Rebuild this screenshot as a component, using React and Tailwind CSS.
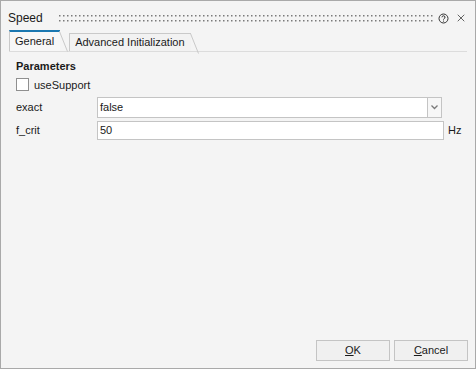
import { X } from "lucide-react";

const font = { fontFamily: '"Liberation Sans", Arial, sans-serif' };

function Grip() {
  return (
    <svg className="h-[9px] flex-1">
      <defs>
        <pattern id="grip" width="4" height="5" patternUnits="userSpaceOnUse">
          <rect x="1" y="1" width="1.5" height="1.5" fill="#7a7a7a" />
        </pattern>
      </defs>
      <rect width="100%" height="9" fill="url(#grip)" />
    </svg>
  );
}

function HelpIcon() {
  return (
    <svg width="11" height="11" viewBox="0 0 11 11" fill="none" stroke="#333" strokeWidth="1">
      <circle cx="5.5" cy="5.5" r="4.5" />
      <path d="M4 4.3a1.5 1.5 0 1 1 2 1.4c-.4.2-.5.5-.5.9" />
      <rect x="5" y="7.6" width="1" height="1" fill="#333" stroke="none" />
    </svg>
  );
}

function Tab({ label, active }) {
  return (
    <div
      className={`relative flex items-center pl-[5px] pr-[6px] text-[11px] text-[#1a1a1a] ${
        active
          ? "h-[21px] border-t-2 border-l border-t-[#1a77b0] border-l-[#c9c9c9] bg-[#f7f7f7]"
          : "h-[18px] mt-[3px] border-t border-l border-[#c9c9c9] bg-[#f2f2f2]"
      }`}
    >
      {label}
      <svg className="absolute right-[-8px] top-[-1px]" width="9" height="22" viewBox="0 0 9 22">
        <path d="M0 0.5h0.5l8 20" fill="none" stroke="#c9c9c9" />
      </svg>
    </div>
  );
}

export default function App() {
  return (
    <div
      className="flex h-[369px] w-[476px] flex-col border border-[#a9a9a9] bg-[#f4f4f4]"
      style={font}
    >
      <div className="flex h-[28px] items-center pl-[7px] pr-[8px] pt-[6px]">
        <span className="w-[50px] text-[12px] text-[#1a1a1a]">Speed</span>
        <Grip />
        <div className="flex items-center gap-[6px] pl-[5px]">
          <HelpIcon />
          <X className="h-[12px] w-[12px] text-[#333]" strokeWidth={1.5} />
        </div>
      </div>

      <div className="mx-[8px] mt-[1px] flex border-b border-[#dcdcdc]">
        <Tab label="General" active />
        <div className="w-[9px]" />
        <Tab label="Advanced Initialization" />
      </div>

      <div className="flex flex-1 flex-col px-[15px] pt-[6px] text-[11px] text-[#1a1a1a]">
        <div className="font-bold">Parameters</div>
        <label className="mt-[2px] flex items-center gap-[5px]">
          <span className="h-[13px] w-[13px] border border-[#8f8f8f] bg-white" />
          useSupport
        </label>

        <div className="mt-[4px] flex items-center">
          <span className="w-[81px]">exact</span>
          <div className="mr-[18px] flex h-[21px] flex-1 items-center border border-[#c4c4c4] bg-white pl-[2px]">
            <span className="flex-1">false</span>
            <div className="flex h-full w-[14px] items-center justify-center border-l border-[#c4c4c4] bg-[#f7f7f7]">
              <svg width="7" height="5" viewBox="0 0 7 5">
                <path d="M0.5 0.5l3 3 3-3" fill="none" stroke="#7a7a7a" strokeWidth="1.3" />
              </svg>
            </div>
          </div>
        </div>

        <div className="mt-[3px] flex items-center">
          <span className="w-[81px]">f_crit</span>
          <div className="flex h-[19px] flex-1 items-center border border-[#c4c4c4] bg-white pl-[2px]">
            50
          </div>
          <span className="w-[16px] pl-[4px]">Hz</span>
        </div>

        <div className="flex-1" />

        <div className="mb-[7px] mr-[-8px] flex justify-end gap-[4px]">
          <button className="h-[21px] w-[74px] border border-[#c4c4c4] bg-[#f0f0f0] text-[11px]">
            <u>O</u>K
          </button>
          <button className="h-[21px] w-[74px] border border-[#c4c4c4] bg-[#f0f0f0] text-[11px]">
            <u>C</u>ancel
          </button>
        </div>
      </div>
    </div>
  );
}
